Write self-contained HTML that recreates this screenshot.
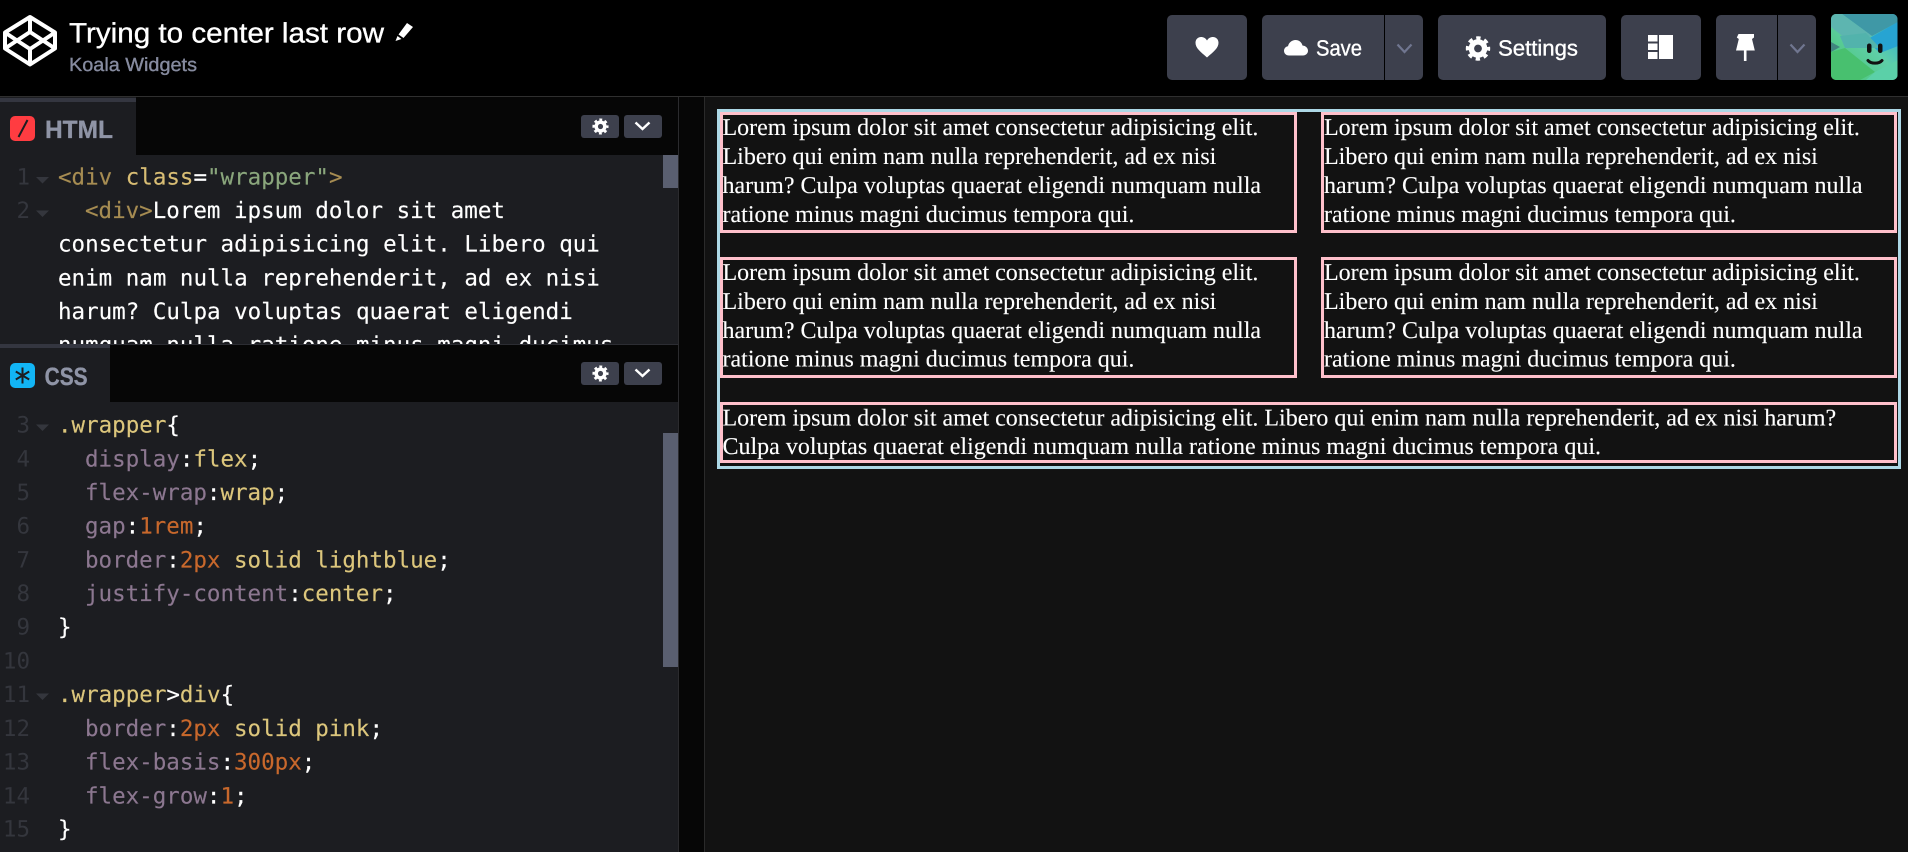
<!DOCTYPE html>
<html lang="en"><head><meta charset="utf-8"><title>Trying to center last row</title>
<style>
html,body{margin:0;padding:0;width:1908px;height:852px;overflow:hidden;background:#000}
svg{display:block;text-rendering:geometricPrecision}
.ui{font-family:"Liberation Sans",sans-serif;stroke-width:.35;stroke:currentColor}
.code{font-family:"DejaVu Sans Mono","Liberation Mono",monospace;font-size:22.5px;fill:#fff;stroke:#fff;stroke-width:.15}
.ln{font-family:"DejaVu Sans Mono","Liberation Mono",monospace;font-size:22.5px;fill:#34363d;text-anchor:end}
.s{font-family:"Liberation Serif",serif;font-size:24px;fill:#fff;stroke:#fff;stroke-width:.12}
.t{fill:#a68c52;stroke:#a68c52}.a{fill:#d8bd74;stroke:#d8bd74}.g{fill:#8aa67c;stroke:#8aa67c}.p{fill:#8c7790;stroke:#8c7790}.v{fill:#dcc67c;stroke:#dcc67c}.n{fill:#c8682c;stroke:#c8682c}
</style></head><body>
<svg xmlns="http://www.w3.org/2000/svg" width="1908" height="852" viewBox="0 0 1908 852">
<defs>
<clipPath id="hp"><rect x="0" y="155" width="663" height="189"/></clipPath>
<clipPath id="av"><rect x="1831" y="14" width="66.5" height="66" rx="5"/></clipPath>
<linearGradient id="ag" x1="0" y1="1" x2="1" y2="0"><stop offset="0" stop-color="#49c46f"/><stop offset=".55" stop-color="#5fcfa8"/><stop offset="1" stop-color="#25a9dc"/></linearGradient>
<g id="gear"><circle r="6.6" fill="none" stroke="#fff" stroke-width="5.4"/><circle r="10.4" fill="none" stroke="#fff" stroke-width="3.6" stroke-dasharray="4.3 3.87" stroke-dashoffset="2.1"/></g>
<path id="tri" d="M0 0h13l-6.500 6.500z" fill="#34363d"/>
</defs>
<!-- base -->
<rect width="1908" height="852" fill="#000"/>
<rect x="0" y="96" width="1908" height="1" fill="#2f2f2f"/>
<rect x="0" y="97" width="678" height="755" fill="#1c1d21"/>
<rect x="678" y="97" width="1" height="755" fill="#2b2b2e"/>
<rect x="679" y="97" width="25" height="755" fill="#060606"/>
<rect x="704" y="97" width="1" height="755" fill="#2a2a2a"/>
<rect x="705" y="97" width="1203" height="755" fill="#121212"/>

<!-- header -->
<g fill="none" stroke="#fff" stroke-width="4" stroke-linejoin="round">
<path d="M30 17L55 32.500V48.500L30 64.500L5 48.500V32.500Z"/>
<path d="M30 32L43 40.500L30 49L17 40.500Z"/>
<path d="M30 17V32M30 49V64.500M5 32.500L17 40.500M55 32.500L43 40.500M5 48.500L17 40.500M55 48.500L43 40.500"/>
</g>
<text class="ui" x="69" y="42.700" font-size="28" fill="#fff" color="#fff" textLength="315" lengthAdjust="spacingAndGlyphs">Trying to center last row</text>
<path d="M407 23l6 4-9.500 11-5-3.500zM397.500 36l4 3-6 2z" fill="#fff"/>
<text class="ui" x="69" y="71" font-size="19" fill="#868b9f" color="#868b9f" textLength="128" lengthAdjust="spacingAndGlyphs">Koala Widgets</text>

<!-- header buttons -->
<g fill="#3d404d">
<rect x="1167" y="15" width="80" height="65" rx="5"/>
<rect x="1262" y="15" width="161" height="65" rx="5"/>
<rect x="1438" y="15" width="168" height="65" rx="5"/>
<rect x="1621" y="15" width="80" height="65" rx="5"/>
<rect x="1716" y="15" width="100" height="65" rx="5"/>
</g>
<rect x="1384" y="15" width="1" height="65" fill="#000"/>
<rect x="1777" y="15" width="1" height="65" fill="#000"/>
<path d="M1207 57.500C1200 51.500 1195.500 48 1195.500 42.800C1195.500 39 1198.300 37 1201 37C1203.500 37 1205.800 38.300 1207 40.500C1208.200 38.300 1210.500 37 1213 37C1215.700 37 1218.500 39 1218.500 42.800C1218.500 48 1214 51.500 1207 57.500Z" fill="#fff"/>
<path d="M1289 55.500C1285.800 55.500 1284 53.300 1284 50.800C1284 48.300 1285.800 46.500 1288 46.200C1288.800 42.500 1292 40 1295.500 40C1299 40 1301.700 42.300 1302.500 45.500C1305.800 45.800 1308 48 1308 50.800C1308 53.500 1305.800 55.500 1303 55.500Z" fill="#fff"/>
<text class="ui" x="1316" y="55.700" font-size="22" fill="#fff" color="#fff" textLength="46" lengthAdjust="spacingAndGlyphs">Save</text>
<path d="M1397.500 44.500L1404.500 52L1411.500 44.500" fill="none" stroke="#707690" stroke-width="2.200"/>
<use href="#gear" transform="translate(1478 48.500)"/>
<text class="ui" x="1498" y="55.700" font-size="22" fill="#fff" color="#fff" textLength="80" lengthAdjust="spacingAndGlyphs">Settings</text>
<path d="M1648 35h9.500v6.500h-9.500zM1648 43.500h9.500v6.500h-9.500zM1648 52h9.500v7h-9.500zM1659 35h14v24h-14z" fill="#fff"/>
<path d="M1738.500 34h15.500v3.500l-2 1.500 2.800 11.500h-4.300v0h-4v10.500h-2.600v-10.500h-7.900l2.800-11.500-2-1.500z" fill="#fff"/>
<path d="M1790.500 44.500L1797.500 52L1804.500 44.500" fill="none" stroke="#707690" stroke-width="2.200"/>

<!-- avatar -->
<g clip-path="url(#av)">
<rect x="1831" y="14" width="67" height="66" fill="url(#ag)"/>
<path d="M1842 14H1898V22L1872 36Z" fill="#3f98a6"/>
<path d="M1898 22L1866 40L1880 53L1898 46Z" fill="#27a4d2"/>
<path d="M1831 14H1842L1872 36L1850 42L1831 27Z" fill="#5db5b0"/>
<path d="M1831 42L1840 47L1831 52Z" fill="#41857f"/>
<path d="M1840 36L1866 33L1880 48L1845 48Z" fill="#52b3ac"/>
<path d="M1831 52L1845 48L1875 72L1860 80H1831Z" fill="#48c06f"/>
<path d="M1875 72L1898 60V80H1866Z" fill="#5bd0a8"/>
</g>
<rect x="1867" y="43.500" width="4.500" height="9.500" rx="2.200" fill="#111"/>
<rect x="1878" y="43.500" width="4.500" height="9.500" rx="2.200" fill="#111"/>
<path d="M1868 60.500C1871 64 1879 64 1882 60.500" fill="none" stroke="#111" stroke-width="3" stroke-linecap="round"/>

<!-- HTML pane -->
<rect x="136" y="97" width="542" height="58" fill="#060606"/>
<rect x="0" y="98" width="136" height="4" fill="#343640"/>
<rect x="10" y="116" width="25" height="25" rx="5" fill="#ff3c41"/>
<path d="M27.500 120L18.500 137" stroke="#1c1d21" stroke-width="2"/>
<text class="ui" x="45" y="138" font-size="25" font-weight="700" fill="#8f94a6" color="#8f94a6" textLength="68" lengthAdjust="spacingAndGlyphs">HTML</text>
<rect x="581" y="115" width="38" height="23" rx="3" fill="#3d404d"/>
<rect x="624" y="115" width="38" height="23" rx="3" fill="#3d404d"/>
<use href="#gear" transform="translate(600.500 126.500) scale(.66)"/>
<path d="M635.500 122.500L642.500 129L649.500 122.500" fill="none" stroke="#fff" stroke-width="2.400"/>
<rect x="663" y="155" width="15" height="33" fill="#5a5f70"/>
<g clip-path="url(#hp)">
<text class="ln" x="30" y="184.300">1</text>
<text class="ln" x="30" y="218">2</text>
<use href="#tri" x="36" y="177"/>
<use href="#tri" x="36" y="210.500"/>
<text class="code" x="58" y="184.300"><tspan class="t">&lt;div</tspan> <tspan class="a">class</tspan>=<tspan class="g">"wrapper"</tspan><tspan class="t">&gt;</tspan></text>
<text class="code" x="85" y="218"><tspan class="t">&lt;div&gt;</tspan>Lorem ipsum dolor sit amet</text>
<text class="code" x="58" y="251.600">consectetur adipisicing elit. Libero qui</text>
<text class="code" x="58" y="285.300">enim nam nulla reprehenderit, ad ex nisi</text>
<text class="code" x="58" y="319">harum? Culpa voluptas quaerat eligendi</text>
<text class="code" x="58" y="352.600">numquam nulla ratione minus magni ducimus</text>
</g>

<!-- CSS pane -->
<rect x="0" y="344" width="678" height="1" fill="#2c2d33"/>
<rect x="110" y="345" width="568" height="57" fill="#060606"/>
<rect x="0" y="344" width="110" height="4" fill="#343640"/>
<rect x="10" y="363" width="25" height="25" rx="5" fill="#12b5f5"/>
<path d="M22.500 367.500V383.500M15.800 371.500L29.200 379.500M29.200 371.500L15.800 379.500" stroke="#1c1d21" stroke-width="2" fill="none"/>
<text class="ui" x="44.600" y="385" font-size="25" font-weight="700" fill="#8f94a6" color="#8f94a6" textLength="43" lengthAdjust="spacingAndGlyphs">CSS</text>
<rect x="581" y="362" width="38" height="23" rx="3" fill="#3d404d"/>
<rect x="624" y="362" width="38" height="23" rx="3" fill="#3d404d"/>
<use href="#gear" transform="translate(600.500 373.500) scale(.66)"/>
<path d="M635.500 369.500L642.500 376L649.500 369.500" fill="none" stroke="#fff" stroke-width="2.400"/>
<rect x="663" y="433" width="15" height="234" fill="#5a5f70"/>

<text class="ln" x="30" y="432.700">3</text>
<text class="ln" x="30" y="466.400">4</text>
<text class="ln" x="30" y="500">5</text>
<text class="ln" x="30" y="533.700">6</text>
<text class="ln" x="30" y="567.400">7</text>
<text class="ln" x="30" y="601">8</text>
<text class="ln" x="30" y="634.700">9</text>
<text class="ln" x="30" y="668.400">10</text>
<text class="ln" x="30" y="702">11</text>
<text class="ln" x="30" y="736">12</text>
<text class="ln" x="30" y="769.600">13</text>
<text class="ln" x="30" y="803.300">14</text>
<text class="ln" x="30" y="836.700">15</text>
<use href="#tri" x="36" y="424.500"/>
<use href="#tri" x="36" y="693.500"/>

<text class="code" x="58" y="432.700"><tspan class="v">.wrapper</tspan>{</text>
<text class="code" x="85" y="466.400"><tspan class="p">display</tspan>:<tspan class="v">flex</tspan>;</text>
<text class="code" x="85" y="500"><tspan class="p">flex-wrap</tspan>:<tspan class="v">wrap</tspan>;</text>
<text class="code" x="85" y="533.700"><tspan class="p">gap</tspan>:<tspan class="n">1rem</tspan>;</text>
<text class="code" x="85" y="567.400"><tspan class="p">border</tspan>:<tspan class="n">2px</tspan> <tspan class="v">solid lightblue</tspan>;</text>
<text class="code" x="85" y="601"><tspan class="p">justify-content</tspan>:<tspan class="v">center</tspan>;</text>
<text class="code" x="58" y="634.700">}</text>
<text class="code" x="58" y="702"><tspan class="v">.wrapper</tspan>&gt;<tspan class="v">div</tspan>{</text>
<text class="code" x="85" y="736"><tspan class="p">border</tspan>:<tspan class="n">2px</tspan> <tspan class="v">solid pink</tspan>;</text>
<text class="code" x="85" y="769.600"><tspan class="p">flex-basis</tspan>:<tspan class="n">300px</tspan>;</text>
<text class="code" x="85" y="803.300"><tspan class="p">flex-grow</tspan>:<tspan class="n">1</tspan>;</text>
<text class="code" x="58" y="836.700">}</text>

<!-- preview -->
<rect x="718.500" y="110.500" width="1181" height="357" fill="none" stroke="#add8e6" stroke-width="3"/>
<g fill="none" stroke="#ffc0cb" stroke-width="3">
<rect x="721.500" y="113.500" width="574" height="118"/>
<rect x="1322.500" y="113.500" width="573" height="118"/>
<rect x="721.500" y="258.500" width="574" height="118"/>
<rect x="1322.500" y="258.500" width="573" height="118"/>
<rect x="721.500" y="403.500" width="1174" height="58"/>
</g>
<text class="s" x="722.500" y="135">Lorem ipsum dolor sit amet consectetur adipisicing elit.</text>
<text class="s" x="722.500" y="164">Libero qui enim nam nulla reprehenderit, ad ex nisi</text>
<text class="s" x="722.500" y="193">harum? Culpa voluptas quaerat eligendi numquam nulla</text>
<text class="s" x="722.500" y="221.800">ratione minus magni ducimus tempora qui.</text>
<text class="s" x="1324" y="135">Lorem ipsum dolor sit amet consectetur adipisicing elit.</text>
<text class="s" x="1324" y="164">Libero qui enim nam nulla reprehenderit, ad ex nisi</text>
<text class="s" x="1324" y="193">harum? Culpa voluptas quaerat eligendi numquam nulla</text>
<text class="s" x="1324" y="221.800">ratione minus magni ducimus tempora qui.</text>
<text class="s" x="722.500" y="280">Lorem ipsum dolor sit amet consectetur adipisicing elit.</text>
<text class="s" x="722.500" y="309">Libero qui enim nam nulla reprehenderit, ad ex nisi</text>
<text class="s" x="722.500" y="338">harum? Culpa voluptas quaerat eligendi numquam nulla</text>
<text class="s" x="722.500" y="366.500">ratione minus magni ducimus tempora qui.</text>
<text class="s" x="1324" y="280">Lorem ipsum dolor sit amet consectetur adipisicing elit.</text>
<text class="s" x="1324" y="309">Libero qui enim nam nulla reprehenderit, ad ex nisi</text>
<text class="s" x="1324" y="338">harum? Culpa voluptas quaerat eligendi numquam nulla</text>
<text class="s" x="1324" y="366.500">ratione minus magni ducimus tempora qui.</text>
<text class="s" x="722.500" y="425.500">Lorem ipsum dolor sit amet consectetur adipisicing elit. Libero qui enim nam nulla reprehenderit, ad ex nisi harum?</text>
<text class="s" x="722.500" y="454">Culpa voluptas quaerat eligendi numquam nulla ratione minus magni ducimus tempora qui.</text>
</svg>
</body></html>
